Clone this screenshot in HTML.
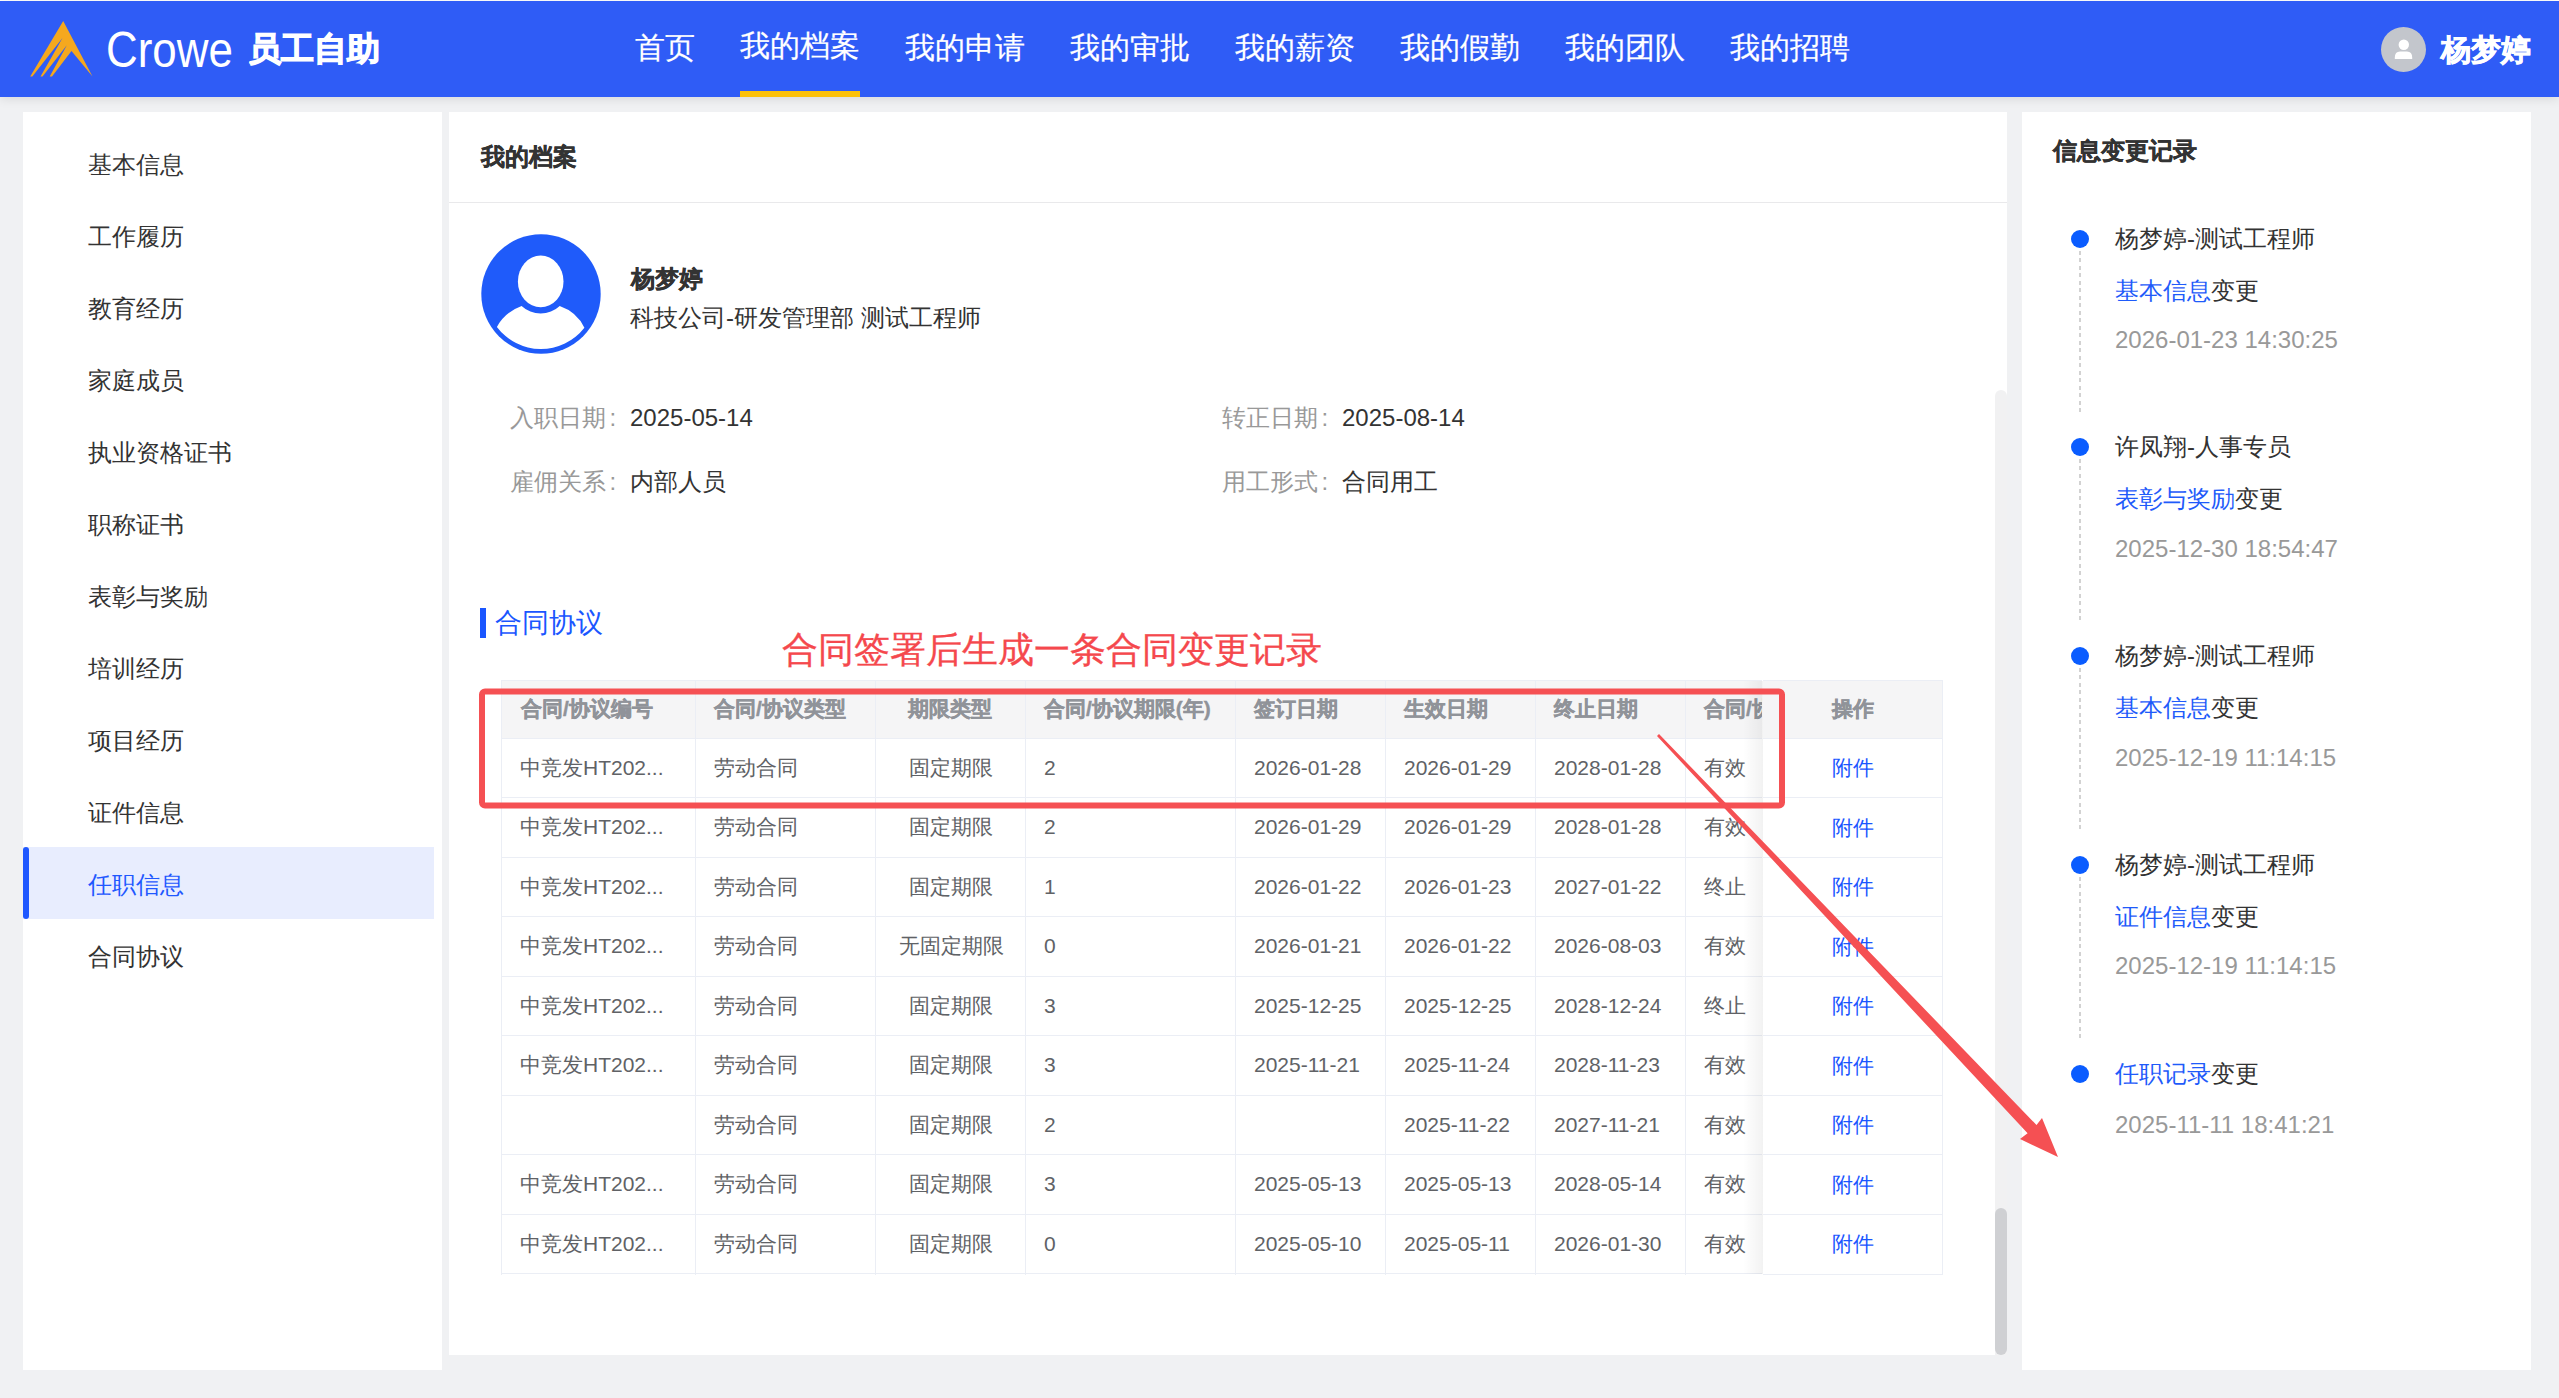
<!DOCTYPE html>
<html><head><meta charset="utf-8">
<style>
*{box-sizing:border-box;margin:0;padding:0}
html,body{width:2559px;height:1398px;overflow:hidden;background:#f0f1f3;font-family:"Liberation Sans",sans-serif;color:#333}
.abs{position:absolute}
.t{position:absolute;white-space:nowrap;line-height:1}
.nav{position:absolute;top:33px;font-size:30px;color:#fff;line-height:30px;white-space:nowrap;-webkit-text-stroke:0.2px #fff}
.side{font-size:24px;color:#333;left:88px}
.cell{position:absolute;font-size:21px;color:#606266;white-space:nowrap;line-height:21px}
.hcell{position:absolute;font-size:21px;color:#909399;font-weight:bold;white-space:nowrap;line-height:21px;-webkit-text-stroke:0.4px #909399}
.tl{position:absolute;font-size:24px;white-space:nowrap;line-height:24px;left:2115px}
</style></head><body>

<div class="abs" style="left:0;top:0;width:2559px;height:1px;background:#fff"></div>
<div class="abs" style="left:0;top:1px;width:2559px;height:96px;background:#2f5cf6;box-shadow:0 2px 10px rgba(0,0,0,0.10)"></div>
<svg class="abs" style="left:0;top:0" width="100" height="97" viewBox="0 0 100 97">
<polygon points="63.2,21 92.5,76.5 71.5,51 52,76.5 49.7,76.5 66.8,45.2 42.5,76.5 40.5,76.5 62.5,38 32.3,76.5 30.2,76.5" fill="#f5a81e"/></svg>
<div class="t" style="left:105.5px;top:24.5px;font-size:50px;color:#fff;transform:scaleX(0.878);transform-origin:0 0">Crowe</div>
<div class="t" style="left:247.5px;top:32px;font-size:33px;color:#fff;font-weight:bold;-webkit-text-stroke:1.2px #fff">员工自助</div>
<div class="nav" style="left:635px;top:33px">首页</div>
<div class="nav" style="left:740px;top:31px">我的档案</div>
<div class="nav" style="left:905px;top:33px">我的申请</div>
<div class="nav" style="left:1070px;top:33px">我的审批</div>
<div class="nav" style="left:1235px;top:33px">我的薪资</div>
<div class="nav" style="left:1400px;top:33px">我的假勤</div>
<div class="nav" style="left:1565px;top:33px">我的团队</div>
<div class="nav" style="left:1730px;top:33px">我的招聘</div>
<div class="abs" style="left:740px;top:91px;width:120px;height:6px;background:#fcc10a"></div>
<div class="abs" style="left:2381px;top:27px;width:45px;height:45px;border-radius:50%;background:#c3c6cc"></div>
<svg class="abs" style="left:2381px;top:27px" width="45" height="45" viewBox="0 0 45 45">
<circle cx="22.8" cy="17.8" r="5.2" fill="#fff"/>
<path d="M13.8 30.5 Q13.8 24.5 19 24.5 L26 24.5 Q31.2 24.5 31.2 30.5 L31.2 32 L13.8 32 Z" fill="#fff"/></svg>
<div class="t" style="left:2441px;top:34.5px;font-size:30px;color:#fff;font-weight:bold;-webkit-text-stroke:0.7px #fff">杨梦婷</div>
<div class="abs" style="left:23px;top:112px;width:419px;height:1258px;background:#fff"></div>
<div class="abs" style="left:23px;top:847px;width:411px;height:72px;background:#e8edfe"></div>
<div class="abs" style="left:23px;top:847px;width:6px;height:72px;background:#1f58ff;border-radius:3px"></div>
<div class="t side" style="top:153px">基本信息</div>
<div class="t side" style="top:225px">工作履历</div>
<div class="t side" style="top:297px">教育经历</div>
<div class="t side" style="top:369px">家庭成员</div>
<div class="t side" style="top:441px">执业资格证书</div>
<div class="t side" style="top:513px">职称证书</div>
<div class="t side" style="top:585px">表彰与奖励</div>
<div class="t side" style="top:657px">培训经历</div>
<div class="t side" style="top:729px">项目经历</div>
<div class="t side" style="top:801px">证件信息</div>
<div class="t side" style="top:873px;color:#1f58ff">任职信息</div>
<div class="t side" style="top:945px">合同协议</div>
<div class="abs" style="left:449px;top:112px;width:1558px;height:1243px;background:#fff"></div>
<div class="t" style="left:481px;top:145px;font-size:24px;font-weight:bold;color:#333;-webkit-text-stroke:0.35px #333">我的档案</div>
<div class="abs" style="left:449px;top:202px;width:1558px;height:1px;background:#e9e9eb"></div>
<svg class="abs" style="left:481px;top:234px" width="120" height="120" viewBox="0 0 120 120">
<circle cx="60" cy="60" r="59.7" fill="#1f5bfa"/>
<ellipse cx="59.7" cy="47.4" rx="22.8" ry="25.8" fill="#fff"/>
<path d="M15.9,92.9 Q24,78 40.6,72 A27.7 27.7 0 0 0 78.7,72 Q96,78 103.4,93.8 A55 55 0 0 1 15.9,92.9 Z" fill="#fff"/>
</svg>
<div class="t" style="left:631px;top:267px;font-size:24px;font-weight:bold;color:#333;-webkit-text-stroke:0.35px #333">杨梦婷</div>
<div class="t" style="left:630px;top:306px;font-size:24px;color:#333">科技公司-研发管理部 测试工程师</div>
<div class="t" style="left:510px;top:406px;font-size:24px;color:#999">入职日期</div>
<div class="t" style="left:609.5px;top:406px;font-size:24px;color:#999">:</div>
<div class="t" style="left:630px;top:406px;font-size:24px;color:#333">2025-05-14</div>
<div class="t" style="left:510px;top:470px;font-size:24px;color:#999">雇佣关系</div>
<div class="t" style="left:609.5px;top:470px;font-size:24px;color:#999">:</div>
<div class="t" style="left:630px;top:470px;font-size:24px;color:#333">内部人员</div>
<div class="t" style="left:1222px;top:406px;font-size:24px;color:#999">转正日期</div>
<div class="t" style="left:1321.5px;top:406px;font-size:24px;color:#999">:</div>
<div class="t" style="left:1342px;top:406px;font-size:24px;color:#333">2025-08-14</div>
<div class="t" style="left:1222px;top:470px;font-size:24px;color:#999">用工形式</div>
<div class="t" style="left:1321.5px;top:470px;font-size:24px;color:#999">:</div>
<div class="t" style="left:1342px;top:470px;font-size:24px;color:#333">合同用工</div>
<div class="abs" style="left:480px;top:608px;width:6px;height:30px;background:#1a56ff"></div>
<div class="t" style="left:495px;top:610px;font-size:27px;color:#1a56ff">合同协议</div>
<div class="abs" style="left:501px;top:680px;width:1261px;height:595px;overflow:hidden">
<div class="abs" style="left:0;top:0;width:1261px;height:58.5px;background:#f5f5f6"></div>
<div class="abs" style="left:0;top:0;width:1261px;height:1px;background:#ebeef5"></div>
<div class="abs" style="left:0;top:57.5px;width:1261px;height:1px;background:#ebeef5"></div>
<div class="abs" style="left:0;top:117.0px;width:1261px;height:1px;background:#ebeef5"></div>
<div class="abs" style="left:0;top:176.5px;width:1261px;height:1px;background:#ebeef5"></div>
<div class="abs" style="left:0;top:236.0px;width:1261px;height:1px;background:#ebeef5"></div>
<div class="abs" style="left:0;top:295.5px;width:1261px;height:1px;background:#ebeef5"></div>
<div class="abs" style="left:0;top:355.0px;width:1261px;height:1px;background:#ebeef5"></div>
<div class="abs" style="left:0;top:414.5px;width:1261px;height:1px;background:#ebeef5"></div>
<div class="abs" style="left:0;top:474.0px;width:1261px;height:1px;background:#ebeef5"></div>
<div class="abs" style="left:0;top:533.5px;width:1261px;height:1px;background:#ebeef5"></div>
<div class="abs" style="left:0;top:593.0px;width:1261px;height:1px;background:#ebeef5"></div>
<div class="abs" style="left:0;top:0;width:1px;height:595px;background:#ebeef5"></div>
<div class="abs" style="left:194px;top:0;width:1px;height:595px;background:#ebeef5"></div>
<div class="abs" style="left:374px;top:0;width:1px;height:595px;background:#ebeef5"></div>
<div class="abs" style="left:524px;top:0;width:1px;height:595px;background:#ebeef5"></div>
<div class="abs" style="left:734px;top:0;width:1px;height:595px;background:#ebeef5"></div>
<div class="abs" style="left:884px;top:0;width:1px;height:595px;background:#ebeef5"></div>
<div class="abs" style="left:1034px;top:0;width:1px;height:595px;background:#ebeef5"></div>
<div class="abs" style="left:1184px;top:0;width:1px;height:595px;background:#ebeef5"></div>
<div class="hcell" style="left:20px;top:17.5px">合同/协议编号</div>
<div class="hcell" style="left:213px;top:17.5px">合同/协议类型</div>
<div class="hcell" style="left:374px;width:150px;text-align:center;top:17.5px">期限类型</div>
<div class="hcell" style="left:543px;top:17.5px">合同/协议期限(年)</div>
<div class="hcell" style="left:753px;top:17.5px">签订日期</div>
<div class="hcell" style="left:903px;top:17.5px">生效日期</div>
<div class="hcell" style="left:1053px;top:17.5px">终止日期</div>
<div class="hcell" style="left:1203px;top:17.5px">合同/协议状态</div>
<div class="cell" style="left:19px;top:76.8px">中竞发HT202...</div>
<div class="cell" style="left:213px;top:76.8px">劳动合同</div>
<div class="cell" style="left:375px;width:150px;text-align:center;top:76.8px">固定期限</div>
<div class="cell" style="left:543px;top:76.8px">2</div>
<div class="cell" style="left:753px;top:76.8px">2026-01-28</div>
<div class="cell" style="left:903px;top:76.8px">2026-01-29</div>
<div class="cell" style="left:1053px;top:76.8px">2028-01-28</div>
<div class="cell" style="left:1203px;top:76.8px">有效</div>
<div class="cell" style="left:19px;top:136.2px">中竞发HT202...</div>
<div class="cell" style="left:213px;top:136.2px">劳动合同</div>
<div class="cell" style="left:375px;width:150px;text-align:center;top:136.2px">固定期限</div>
<div class="cell" style="left:543px;top:136.2px">2</div>
<div class="cell" style="left:753px;top:136.2px">2026-01-29</div>
<div class="cell" style="left:903px;top:136.2px">2026-01-29</div>
<div class="cell" style="left:1053px;top:136.2px">2028-01-28</div>
<div class="cell" style="left:1203px;top:136.2px">有效</div>
<div class="cell" style="left:19px;top:195.8px">中竞发HT202...</div>
<div class="cell" style="left:213px;top:195.8px">劳动合同</div>
<div class="cell" style="left:375px;width:150px;text-align:center;top:195.8px">固定期限</div>
<div class="cell" style="left:543px;top:195.8px">1</div>
<div class="cell" style="left:753px;top:195.8px">2026-01-22</div>
<div class="cell" style="left:903px;top:195.8px">2026-01-23</div>
<div class="cell" style="left:1053px;top:195.8px">2027-01-22</div>
<div class="cell" style="left:1203px;top:195.8px">终止</div>
<div class="cell" style="left:19px;top:255.2px">中竞发HT202...</div>
<div class="cell" style="left:213px;top:255.2px">劳动合同</div>
<div class="cell" style="left:375px;width:150px;text-align:center;top:255.2px">无固定期限</div>
<div class="cell" style="left:543px;top:255.2px">0</div>
<div class="cell" style="left:753px;top:255.2px">2026-01-21</div>
<div class="cell" style="left:903px;top:255.2px">2026-01-22</div>
<div class="cell" style="left:1053px;top:255.2px">2026-08-03</div>
<div class="cell" style="left:1203px;top:255.2px">有效</div>
<div class="cell" style="left:19px;top:314.8px">中竞发HT202...</div>
<div class="cell" style="left:213px;top:314.8px">劳动合同</div>
<div class="cell" style="left:375px;width:150px;text-align:center;top:314.8px">固定期限</div>
<div class="cell" style="left:543px;top:314.8px">3</div>
<div class="cell" style="left:753px;top:314.8px">2025-12-25</div>
<div class="cell" style="left:903px;top:314.8px">2025-12-25</div>
<div class="cell" style="left:1053px;top:314.8px">2028-12-24</div>
<div class="cell" style="left:1203px;top:314.8px">终止</div>
<div class="cell" style="left:19px;top:374.2px">中竞发HT202...</div>
<div class="cell" style="left:213px;top:374.2px">劳动合同</div>
<div class="cell" style="left:375px;width:150px;text-align:center;top:374.2px">固定期限</div>
<div class="cell" style="left:543px;top:374.2px">3</div>
<div class="cell" style="left:753px;top:374.2px">2025-11-21</div>
<div class="cell" style="left:903px;top:374.2px">2025-11-24</div>
<div class="cell" style="left:1053px;top:374.2px">2028-11-23</div>
<div class="cell" style="left:1203px;top:374.2px">有效</div>
<div class="cell" style="left:213px;top:433.8px">劳动合同</div>
<div class="cell" style="left:375px;width:150px;text-align:center;top:433.8px">固定期限</div>
<div class="cell" style="left:543px;top:433.8px">2</div>
<div class="cell" style="left:903px;top:433.8px">2025-11-22</div>
<div class="cell" style="left:1053px;top:433.8px">2027-11-21</div>
<div class="cell" style="left:1203px;top:433.8px">有效</div>
<div class="cell" style="left:19px;top:493.2px">中竞发HT202...</div>
<div class="cell" style="left:213px;top:493.2px">劳动合同</div>
<div class="cell" style="left:375px;width:150px;text-align:center;top:493.2px">固定期限</div>
<div class="cell" style="left:543px;top:493.2px">3</div>
<div class="cell" style="left:753px;top:493.2px">2025-05-13</div>
<div class="cell" style="left:903px;top:493.2px">2025-05-13</div>
<div class="cell" style="left:1053px;top:493.2px">2028-05-14</div>
<div class="cell" style="left:1203px;top:493.2px">有效</div>
<div class="cell" style="left:19px;top:552.8px">中竞发HT202...</div>
<div class="cell" style="left:213px;top:552.8px">劳动合同</div>
<div class="cell" style="left:375px;width:150px;text-align:center;top:552.8px">固定期限</div>
<div class="cell" style="left:543px;top:552.8px">0</div>
<div class="cell" style="left:753px;top:552.8px">2025-05-10</div>
<div class="cell" style="left:903px;top:552.8px">2025-05-11</div>
<div class="cell" style="left:1053px;top:552.8px">2026-01-30</div>
<div class="cell" style="left:1203px;top:552.8px">有效</div>
</div>
<div class="abs" style="left:1743px;top:681px;width:20px;height:593px;background:linear-gradient(to right,rgba(0,0,0,0),rgba(0,0,0,0.05))"></div>
<div class="abs" style="left:1763px;top:680px;width:180px;height:595px;background:#fff;border-right:1px solid #ebeef5;border-top:1px solid #ebeef5;border-bottom:1px solid #ebeef5"></div>
<div class="abs" style="left:1763px;top:680px;width:180px;height:58.5px;background:#f5f5f6;border-right:1px solid #ebeef5;border-top:1px solid #ebeef5"></div>
<div class="abs" style="left:1763px;top:737.5px;width:180px;height:1px;background:#ebeef5"></div>
<div class="abs" style="left:1763px;top:797.0px;width:180px;height:1px;background:#ebeef5"></div>
<div class="abs" style="left:1763px;top:856.5px;width:180px;height:1px;background:#ebeef5"></div>
<div class="abs" style="left:1763px;top:916.0px;width:180px;height:1px;background:#ebeef5"></div>
<div class="abs" style="left:1763px;top:975.5px;width:180px;height:1px;background:#ebeef5"></div>
<div class="abs" style="left:1763px;top:1035.0px;width:180px;height:1px;background:#ebeef5"></div>
<div class="abs" style="left:1763px;top:1094.5px;width:180px;height:1px;background:#ebeef5"></div>
<div class="abs" style="left:1763px;top:1154.0px;width:180px;height:1px;background:#ebeef5"></div>
<div class="abs" style="left:1763px;top:1213.5px;width:180px;height:1px;background:#ebeef5"></div>
<div class="hcell" style="left:1763px;width:180px;text-align:center;top:697.5px">操作</div>
<div class="cell" style="left:1763px;width:180px;text-align:center;top:757.2px;color:#1a56ff">附件</div>
<div class="cell" style="left:1763px;width:180px;text-align:center;top:816.8px;color:#1a56ff">附件</div>
<div class="cell" style="left:1763px;width:180px;text-align:center;top:876.2px;color:#1a56ff">附件</div>
<div class="cell" style="left:1763px;width:180px;text-align:center;top:935.8px;color:#1a56ff">附件</div>
<div class="cell" style="left:1763px;width:180px;text-align:center;top:995.2px;color:#1a56ff">附件</div>
<div class="cell" style="left:1763px;width:180px;text-align:center;top:1054.8px;color:#1a56ff">附件</div>
<div class="cell" style="left:1763px;width:180px;text-align:center;top:1114.2px;color:#1a56ff">附件</div>
<div class="cell" style="left:1763px;width:180px;text-align:center;top:1173.8px;color:#1a56ff">附件</div>
<div class="cell" style="left:1763px;width:180px;text-align:center;top:1233.2px;color:#1a56ff">附件</div>
<div class="abs" style="left:2022px;top:112px;width:509px;height:1258px;background:#fff"></div>
<div class="t" style="left:2053px;top:139px;font-size:24px;font-weight:bold;color:#333;-webkit-text-stroke:0.4px #333">信息变更记录</div>
<div class="abs" style="left:2071px;top:229.5px;width:18px;height:18px;border-radius:50%;background:#0a5cff"></div>
<div class="tl" style="top:226.5px;color:#333">杨梦婷-测试工程师</div>
<div class="tl" style="top:278.5px;color:#333"><span style="color:#1f5bfa">基本信息</span>变更</div>
<div class="tl" style="top:328.0px;color:#999">2026-01-23 14:30:25</div>
<div class="abs" style="left:2079px;top:250.5px;width:2px;height:164px;background:repeating-linear-gradient(to bottom,#d2d2d2 0 4px,transparent 4px 7.5px)"></div>
<div class="abs" style="left:2071px;top:438.2px;width:18px;height:18px;border-radius:50%;background:#0a5cff"></div>
<div class="tl" style="top:435.2px;color:#333">许凤翔-人事专员</div>
<div class="tl" style="top:487.2px;color:#333"><span style="color:#1f5bfa">表彰与奖励</span>变更</div>
<div class="tl" style="top:536.8px;color:#999">2025-12-30 18:54:47</div>
<div class="abs" style="left:2079px;top:459.2px;width:2px;height:164px;background:repeating-linear-gradient(to bottom,#d2d2d2 0 4px,transparent 4px 7.5px)"></div>
<div class="abs" style="left:2071px;top:647.0px;width:18px;height:18px;border-radius:50%;background:#0a5cff"></div>
<div class="tl" style="top:644.0px;color:#333">杨梦婷-测试工程师</div>
<div class="tl" style="top:696.0px;color:#333"><span style="color:#1f5bfa">基本信息</span>变更</div>
<div class="tl" style="top:745.5px;color:#999">2025-12-19 11:14:15</div>
<div class="abs" style="left:2079px;top:668.0px;width:2px;height:164px;background:repeating-linear-gradient(to bottom,#d2d2d2 0 4px,transparent 4px 7.5px)"></div>
<div class="abs" style="left:2071px;top:855.8px;width:18px;height:18px;border-radius:50%;background:#0a5cff"></div>
<div class="tl" style="top:852.8px;color:#333">杨梦婷-测试工程师</div>
<div class="tl" style="top:904.8px;color:#333"><span style="color:#1f5bfa">证件信息</span>变更</div>
<div class="tl" style="top:954.2px;color:#999">2025-12-19 11:14:15</div>
<div class="abs" style="left:2079px;top:876.8px;width:2px;height:164px;background:repeating-linear-gradient(to bottom,#d2d2d2 0 4px,transparent 4px 7.5px)"></div>
<div class="abs" style="left:2071px;top:1064.5px;width:18px;height:18px;border-radius:50%;background:#0a5cff"></div>
<div class="tl" style="top:1061.5px;color:#333"><span style="color:#1f5bfa">任职记录</span>变更</div>
<div class="tl" style="top:1112.5px;color:#999">2025-11-11 18:41:21</div>
<div class="abs" style="left:1995px;top:390px;width:12px;height:965px;background:#f1f1f2;border-radius:6px 6px 0 0"></div>
<div class="abs" style="left:1995px;top:1208px;width:12px;height:147px;background:#cfd0d3;border-radius:6px"></div>
<div class="t" style="left:782px;top:631.5px;font-size:36px;color:#f5484d;-webkit-text-stroke:0.3px #f5484d">合同签署后生成一条合同变更记录</div>
<svg class="abs" style="left:0;top:0" width="2559" height="1398" viewBox="0 0 2559 1398">
<rect x="482" y="691.5" width="1300" height="114" rx="3" fill="none" stroke="#f55053" stroke-width="6"/>
<polygon points="1657,736 1659,734 2036.5,1125 2042,1118 2058,1157 2020,1139 2027.6,1133.3" fill="#f55053"/>
</svg>
</body></html>
